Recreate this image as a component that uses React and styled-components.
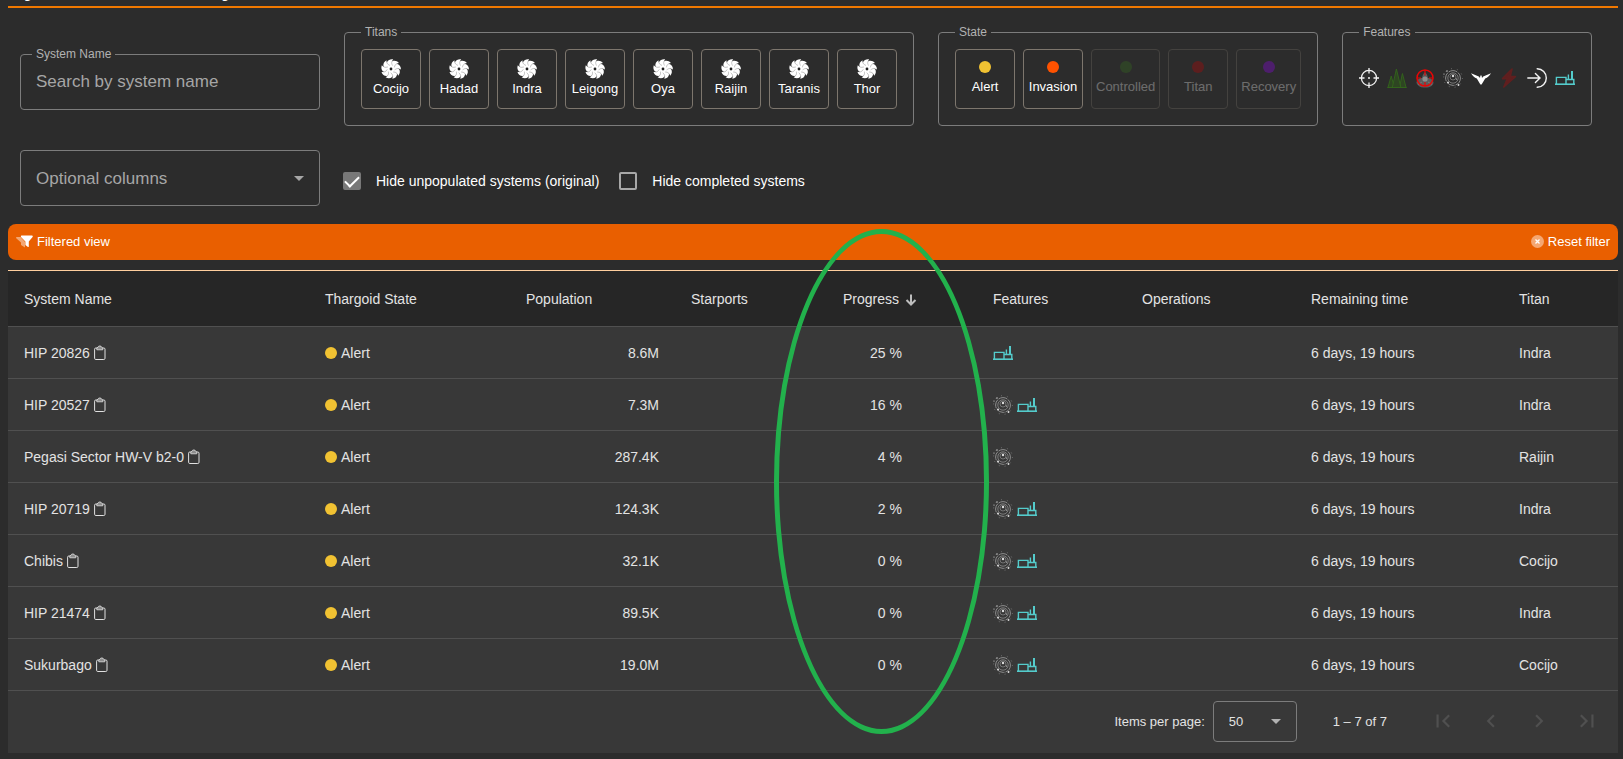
import React, { useState } from 'react'
import styled, { createGlobalStyle } from 'styled-components';

const titans = ['Cocijo', 'Hadad', 'Indra', 'Leigong', 'Oya', 'Raijin', 'Taranis', 'Thor'];

const states = [
    { name: 'Alert', color: '#f1c232', on: true },
    { name: 'Invasion', color: '#ff5200', on: true },
    { name: 'Controlled', color: '#38761d', on: false },
    { name: 'Titan', color: '#cc0000', on: false },
    { name: 'Recovery', color: '#9900ff', on: false },
];

// column widths are shares, the table stretches them to the window
const columns = [
    { title: 'System Name', width: 301 },
    { title: 'Thargoid State', width: 201 },
    { title: 'Population', width: 165 },
    { title: 'Starports', width: 152 },
    { title: 'Progress', width: 150, sorted: true },
    { title: 'Features', width: 149 },
    { title: 'Operations', width: 169 },
    { title: 'Remaining time', width: 208 },
    { title: 'Titan', width: 115 },
];

const systems = [
    { name: 'HIP 20826', population: '8.6M', progress: 25, rings: false, station: true, titan: 'Indra' },
    { name: 'HIP 20527', population: '7.3M', progress: 16, rings: true, station: true, titan: 'Indra' },
    { name: 'Pegasi Sector HW-V b2-0', population: '287.4K', progress: 4, rings: true, station: false, titan: 'Raijin' },
    { name: 'HIP 20719', population: '124.3K', progress: 2, rings: true, station: true, titan: 'Indra' },
    { name: 'Chibis', population: '32.1K', progress: 0, rings: true, station: true, titan: 'Cocijo' },
    { name: 'HIP 21474', population: '89.5K', progress: 0, rings: true, station: true, titan: 'Indra' },
    { name: 'Sukurbago', population: '19.0M', progress: 0, rings: true, station: true, titan: 'Cocijo' },
];

const blades = [0, 40, 80, 120, 160, 200, 240, 280, 320];

function TitanIcon() {
    return (
        <svg width="20" height="20" viewBox="0 0 20 20" aria-hidden="true">
            {blades.map((angle) => (
                <path key={angle} transform={`rotate(${angle} 10 10)`} fill="#fff"
                    d="M10 9C6.600 8 5.200 5.400 6.200 2.800C7.200 0.800 9.600 -0.200 12.200 0.300C11.200 1.400 10.800 2.800 11.200 4.200C11.500 5.600 12 6.900 12 9Z" />
            ))}
            <circle cx="10" cy="10" r="6" fill="#fff" />
            {blades.map((angle) => (
                <path key={angle} transform={`rotate(${angle} 10 10)`} fill="none" stroke="#777" strokeWidth="0.4"
                    d="M12 1.200C10.800 2.200 10.400 3.400 10.800 4.800C11 5.600 11.300 6 11.500 6.600" />
            ))}
            <circle cx="10" cy="10" r="1.4" fill="#222" />
        </svg>
    )
}

function CrosshairIcon() {
    return (
        <svg width="20" height="20" viewBox="0 0 20 20" fill="none" stroke="#f2f2f2" strokeWidth="1.3" aria-hidden="true">
            <circle cx="10" cy="10" r="7.6" />
            <path d="M10 0V5.500M10 14.500V20M0 10H5.500M14.500 10H20" />
            <circle cx="10" cy="10" r="1" fill="#f2f2f2" stroke="none" />
        </svg>
    )
}

function PeaksIcon() {
    return (
        <svg width="20" height="20" viewBox="0 0 20 20" fill="#2e4522" stroke="#33661c" strokeWidth="0.9" aria-hidden="true">
            <path d="M0.800 20L4.200 8L7.600 20Z" />
            <path d="M12.400 20L15.400 5.500L19.200 20Z" />
            <path d="M5.200 20L9.400 1L14 20Z" />
            <path d="M0.500 19.500H19.500" />
        </svg>
    )
}

function TargetIcon() {
    return (
        <svg width="20" height="20" viewBox="0 0 20 20" fill="none" aria-hidden="true">
            <path fill="#5c5c5c" d="M10 4.500C12 5.500 12.500 8 13 10C16 10 18.500 12 18.500 15C17 19 13 20 10 19.500C6 20 2.500 18 1.500 15C1.500 12 4 10 7 10C7.500 8 8 5.500 10 4.500Z" />
            <circle cx="10" cy="11" r="2.600" fill="#8d8d8d" />
            <path stroke="#7e7e7e" strokeWidth="0.800" d="M3 16.500L7 14M17 16.500L13 14" />
            <circle cx="10" cy="10" r="8" stroke="#e80505" strokeWidth="1.5" />
            <path stroke="#e80505" strokeWidth="1.2" d="M10 2V7.500M10 14V18M2 10H6M14 10H18" />
        </svg>
    )
}

function RingsIcon() {
    return (
        <svg width="20" height="20" viewBox="0 0 20 20" fill="none" stroke="#8c8c8c" aria-hidden="true">
            <circle cx="10" cy="10" r="7.4" strokeWidth="1" strokeDasharray="9 1" />
            <circle cx="10" cy="10" r="5.200" strokeWidth="0.8" />
            <circle cx="10" cy="9" r="3" strokeWidth="0.7" />
            <circle cx="10" cy="10" r="9.400" strokeWidth="0.700" strokeDasharray="1 5" />
            <g fill="#dcdcdc" stroke="none">
                <circle cx="10" cy="8" r="1.200" />
                <circle cx="5" cy="14.6" r="1" />
                <circle cx="15.5" cy="17" r="0.9" />
                <circle cx="4" cy="3" r="0.7" />
                <circle cx="1" cy="6" r="0.6" />
                <circle cx="13.500" cy="11" r="0.6" />
            </g>
        </svg>
    )
}

function WingsIcon() {
    return (
        <svg width="20" height="20" viewBox="0 0 20 20" fill="#fff" aria-hidden="true">
            <path d="M0 5.200L7.800 8.400L9 10L9.400 7.400H10.600L11 10L12.200 8.400L20 5.200C18.500 7.600 16.500 9.400 14.200 10.600L10.600 16.400H9.400L5.800 10.600C3.500 9.400 1.500 7.600 0 5.200Z" />
        </svg>
    )
}

function BoltIcon() {
    return (
        <svg width="20" height="20" viewBox="0 0 20 20" fill="#601f1f" stroke="#601f1f" strokeWidth="1.600" strokeLinejoin="round" aria-hidden="true">
            <path d="M13 1L3.500 10.600H8.400L4.800 19L16.400 8.600H11.200Z" />
        </svg>
    )
}

function EnterIcon() {
    return (
        <svg width="20" height="20" viewBox="0 0 20 20" fill="none" stroke="#f2f2f2" strokeWidth="1.400" strokeLinecap="round" aria-hidden="true">
            <path d="M0.800 10H12.800M8.400 5.400L13 10L8.400 14.600" />
            <path d="M10.200 0.800C15.400 0.900 19.300 5 19.300 10C19.300 15 15.400 19.100 10.200 19.200" />
        </svg>
    )
}

function StationIcon() {
    return (
        <svg width="20" height="20" viewBox="0 0 20 20" fill="none" stroke="#54cccc" aria-hidden="true">
            <path strokeWidth="1.400" d="M1.400 16V9.400H11V16M11 11.500H18.800V16M13.400 11V6.500" />
            <path strokeWidth="2" d="M17 11.500V3" />
            <path strokeWidth="1.600" d="M0 16.200H20" />
        </svg>
    )
}

function ClipboardIcon() {
    return (
        <svg width="12" height="16" viewBox="0 0 12 16" fill="none" stroke="#e0e0e0" strokeWidth="1" aria-hidden="true">
            <rect x="0.600" y="3" width="10.400" height="11.500" rx="1.200" />
            <path d="M2.800 4.800V3L4 2.200C4.200 0.500 7.400 0.500 7.600 2.200L8.800 3V4.800Z" fill="#8d8d8d" strokeWidth="0.800" />
        </svg>
    )
}

function Pager({ d, label }) {
    return (
        <PageButton disabled aria-label={label}>
            <svg width="26" height="26" viewBox="0 0 24 24" fill="currentColor"><path d={d} /></svg>
        </PageButton>
    )
}

function Arrow() {
    return (
        <SelectArrow width="10" height="5" viewBox="0 0 10 5" aria-hidden="true"><path d="M0 0L5 5L10 0Z" fill="currentColor" /></SelectArrow>
    )
}

function App() {
    const [search, setSearch] = useState('');
    const [hideUnpopulated, setHideUnpopulated] = useState(true);
    const [hideCompleted, setHideCompleted] = useState(false);
    return (
        <Page>
            <GlobalStyle />
            <Title>Systems list history</Title>
            <Filters>
                <FilterRow>
                    <SearchField>
                        <legend><label htmlFor="system">System Name</label></legend>
                        <SearchInput id="system" placeholder="Search by system name" value={search} onChange={(e) => setSearch(e.target.value)} />
                    </SearchField>
                    <Group>
                        <legend>Titans</legend>
                        <Tiles>
                            {titans.map((name) => (
                                <Tile key={name} $gap={1}><TitanIcon />{name}</Tile>
                            ))}
                        </Tiles>
                    </Group>
                    <Group>
                        <legend>State</legend>
                        <Tiles>
                            {states.map((state) => (
                                <Tile key={state.name} $off={!state.on} $gap={5}>
                                    <Dot $color={state.color} />{state.name}
                                </Tile>
                            ))}
                        </Tiles>
                    </Group>
                    <Group>
                        <legend>Features</legend>
                        <FeatureList>
                            <IconButton aria-label="Attacked"><CrosshairIcon /></IconButton>
                            <IconButton aria-label="Barnacle matrix"><PeaksIcon /></IconButton>
                            <IconButton aria-label="Spire target"><TargetIcon /></IconButton>
                            <IconButton aria-label="Ring features"><RingsIcon /></IconButton>
                            <IconButton aria-label="Federal ships"><WingsIcon /></IconButton>
                            <IconButton aria-label="Reactivation"><BoltIcon /></IconButton>
                            <IconButton aria-label="Nearby"><EnterIcon /></IconButton>
                            <IconButton aria-label="Ground ports"><StationIcon /></IconButton>
                        </FeatureList>
                    </Group>
                </FilterRow>
                <OptionRow>
                    <SelectBox>
                        <ColumnSelect aria-label="Optional columns" defaultValue="">
                            <option value="">Optional columns</option>
                        </ColumnSelect>
                        <Arrow />
                    </SelectBox>
                    <Checks>
                        <CheckLabel>
                            <Check type="checkbox" checked={hideUnpopulated} onChange={(e) => setHideUnpopulated(e.target.checked)} />
                            Hide unpopulated systems (original)
                        </CheckLabel>
                        <CheckLabel>
                            <Check type="checkbox" checked={hideCompleted} onChange={(e) => setHideCompleted(e.target.checked)} />
                            Hide completed systems
                        </CheckLabel>
                    </Checks>
                </OptionRow>
            </Filters>
            <Results>
                <Bar>
                    <BarItem>
                        <svg width="17" height="13" viewBox="0 0 17 13" fill="#fff" aria-hidden="true">
                            <path opacity="0.45" d="M0.600 2H4.600L9 7V12.600L5 10V7.500L0.200 3.200Q-0.200 2.200 0.600 2Z" />
                            <path d="M5.400 0.400H16.200Q17.200 1 16.600 2L12.800 6.600V11.400Q12.600 12.200 11.600 11.800L9.400 10V6.600L5 2Q4.600 1 5.400 0.400Z" />
                        </svg>
                        Filtered view
                    </BarItem>
                    <ResetButton>
                        <svg width="13" height="13" viewBox="0 0 13 13" aria-hidden="true">
                            <circle cx="6.500" cy="6.500" r="6.500" fill="#f5a772" />
                            <path d="M4.500 4.500L8.500 8.500M8.500 4.500L4.500 8.500" stroke="#fff" strokeWidth="1.300" />
                        </svg>
                        Reset filter
                    </ResetButton>
                </Bar>
                <Table>
                    <colgroup>
                        {columns.map((c) => <Col key={c.title} $width={c.width} />)}
                    </colgroup>
                    <thead>
                        <tr>
                            {columns.map((c) => (
                                <Th key={c.title} aria-sort={c.sorted ? 'descending' : undefined}>
                                    {c.title}
                                    {c.sorted && (
                                        <SortArrow width="12" height="12" viewBox="0 0 12 12" aria-hidden="true">
                                            <path d="M6 0.500V10.500M1.500 6L6 10.500L10.500 6" fill="none" stroke="#bdbdbd" strokeWidth="2" />
                                        </SortArrow>
                                    )}
                                </Th>
                            ))}
                        </tr>
                    </thead>
                    <tbody>
                        {systems.map((s) => (
                            <tr key={s.name}>
                                <Td><Inline>{s.name}<IconButton aria-label={`Copy ${s.name}`}><ClipboardIcon /></IconButton></Inline></Td>
                                <Td><Inline><Dot $color="#f1c232" />Alert</Inline></Td>
                                <Td $right>{s.population}</Td>
                                <Td></Td>
                                <ProgressTd $right>{s.progress} %</ProgressTd>
                                <Td><Inline>{s.rings && <RingsIcon />}{s.station && <StationIcon />}</Inline></Td>
                                <Td></Td>
                                <Td>6 days, 19 hours</Td>
                                <Td>{s.titan}</Td>
                            </tr>
                        ))}
                    </tbody>
                </Table>
                <Footer>
                    <label htmlFor="size">Items per page:</label>
                    <SizeBox>
                        <SizeSelect id="size" defaultValue="50">
                            <option>50</option>
                        </SizeSelect>
                        <Arrow />
                    </SizeBox>
                    <Range>1 – 7 of 7</Range>
                    <Pager label="First page" d="M18.410 16.590L13.820 12l4.590-4.590L17 6l-6 6 6 6zM6 6h2v12H6z" />
                    <Pager label="Previous page" d="M15.410 7.410L14 6l-6 6 6 6 1.410-1.410L10.830 12z" />
                    <Pager label="Next page" d="M10 6L8.590 7.410 13.170 12l-4.580 4.590L10 18l6-6z" />
                    <Pager label="Last page" d="M5.590 7.410L10.180 12l-4.590 4.590L7 18l6-6-6-6zM16 6h2v12h-2z" />
                </Footer>
                <Marker />
            </Results>
        </Page>
    )
}

export default App

const GlobalStyle = createGlobalStyle`
    * {
        box-sizing:border-box;
    }
    body {
        margin:0;
        background-color:#2c2c2c;
    }
    button, input, select {
        font-family:inherit;
        margin:0;
    }
`;
const Page = styled.div`
    padding:0 5px 6px 8px;
    overflow:hidden;
    color:#fff;
    font-family:"Liberation Sans", Arial, sans-serif;
    font-size:14px;
`;
// the page is scrolled, only the foot of the title shows
const Title = styled.h1`
    margin:-26px 0 0;
    padding-bottom:4px;
    border-bottom:2px solid #f07800;
    font-size:24px;
    line-height:28px;
`;
const Filters = styled.div`
    padding:17px 12px 18px;
`;
const FilterRow = styled.div`
    display:flex;
    flex-wrap:wrap;
    align-items:flex-end;
    gap:24px;
`;
const Group = styled.fieldset`
    margin:0;
    min-width:0;
    padding:10px 16px 16px;
    border:1px solid #7c7c7c;
    border-radius:4px;
    legend {
        padding:0 4px;
        color:#b2b2b2;
        font-size:12px;
        line-height:14px;
    }
`;
const SearchField = styled(Group)`
    width:300px;
    margin-bottom:16px;
    padding:0 11px 6px;
`;
const SearchInput = styled.input`
    display:block;
    width:100%;
    height:42px;
    padding:0 4px;
    border:0;
    outline:none;
    background:none;
    color:#fff;
    font-size:17px;
    &::placeholder {
        color:#a6a6a6;
        opacity:1;
    }
`;
const Tiles = styled.div`
    display:flex;
    flex-wrap:wrap;
    gap:8px;
`;
const Tile = styled.button`
    display:flex;
    flex-direction:column;
    align-items:center;
    justify-content:center;
    gap:${(p) => p.$gap}px;
    min-width:60px;
    height:60px;
    padding:0 4px 2px;
    border:1px solid #7d766d;
    border-radius:4px;
    background:none;
    color:#fff;
    font-size:13px;
    line-height:18px;
    opacity:${(p) => (p.$off ? 0.3 : 1)};
    cursor:pointer;
`;
const Dot = styled.span`
    width:12px;
    height:12px;
    border-radius:50%;
    background-color:${(p) => p.$color};
`;
const FeatureList = styled.div`
    display:flex;
    align-items:center;
    gap:8px;
    height:60px;
    padding-bottom:2px;
`;
const IconButton = styled.button`
    display:flex;
    padding:0;
    border:0;
    background:none;
    cursor:pointer;
`;
const OptionRow = styled.div`
    display:flex;
    flex-wrap:wrap;
    align-items:center;
    gap:12px;
    margin-top:24px;
`;
const SelectBox = styled.div`
    position:relative;
    width:300px;
    color:#a6a6a6;
`;
const SelectArrow = styled.svg`
    position:absolute;
    right:16px;
    top:calc(50% - 2px);
    pointer-events:none;
`;
const ColumnSelect = styled.select`
    appearance:none;
    width:100%;
    height:56px;
    padding:0 15px;
    border:1px solid #7c7c7c;
    border-radius:4px;
    background:none;
    color:inherit;
    font-size:17px;
`;
const Checks = styled.div`
    display:flex;
    flex-wrap:wrap;
    column-gap:9px;
    padding-top:6px;
`;
const CheckLabel = styled.label`
    display:flex;
    align-items:center;
    gap:15px;
    padding-left:11px;
`;
const Check = styled.input`
    appearance:none;
    display:flex;
    justify-content:center;
    width:18px;
    height:18px;
    border:2px solid #a8a8a8;
    border-radius:2px;
    &:checked {
        border-color:#787878;
        background-color:#787878;
    }
    &:checked::after {
        content:'';
        width:6px;
        height:12px;
        margin-top:-1px;
        border:solid #fff;
        border-width:0 2px 2px 0;
        transform:rotate(45deg);
    }
`;
const Results = styled.div`
    position:relative;
`;
const Bar = styled.div`
    display:flex;
    align-items:center;
    justify-content:space-between;
    height:36px;
    margin-bottom:10px;
    padding:0 8px 2px;
    border-radius:8px;
    background-color:#e95f00;
    font-size:13px;
`;
const BarItem = styled.div`
    display:flex;
    align-items:center;
    gap:4px;
`;
const ResetButton = styled.button`
    display:flex;
    align-items:center;
    gap:4px;
    padding:0;
    border:0;
    background:none;
    color:#fff;
    font-size:13px;
    cursor:pointer;
`;
const Table = styled.table`
    width:100%;
    table-layout:fixed;
    border-spacing:0;
    border-top:1px solid #ffcf9e;
    background-color:#383838;
    color:#e3e3e3;
`;
const Col = styled.col`
    width:${(p) => p.$width}px;
`;
const Th = styled.th`
    height:56px;
    padding:0 16px;
    border-bottom:1px solid #505050;
    background-color:#262626;
    font-weight:400;
    text-align:left;
    white-space:nowrap;
`;
const SortArrow = styled.svg`
    margin-left:6px;
    vertical-align:-2px;
`;
const Td = styled.td`
    height:52px;
    padding:0 16px;
    border-bottom:1px solid #505050;
    text-align:${(p) => (p.$right ? 'right' : 'left')};
`;
const ProgressTd = styled(Td)`
    padding-right:75px;
`;
const Inline = styled.div`
    display:flex;
    align-items:center;
    gap:4px;
`;
const Footer = styled.div`
    display:flex;
    align-items:center;
    justify-content:flex-end;
    height:62px;
    padding:0 7px 2px 0;
    background-color:#383838;
    color:#e3e3e3;
    font-size:13px;
`;
const SizeBox = styled(SelectBox)`
    width:84px;
    margin-left:8px;
    color:#b2b2b2;
`;
const SizeSelect = styled(ColumnSelect)`
    display:block;
    height:41px;
    color:#e3e3e3;
    font-size:13px;
`;
const Range = styled.div`
    margin:0 32px 0 36px;
`;
const PageButton = styled.button`
    display:flex;
    align-items:center;
    justify-content:center;
    width:48px;
    height:48px;
    padding:0;
    border:0;
    background:none;
    color:#505050;
`;
// hand drawn ring around the progress column
const Marker = styled.div`
    position:absolute;
    top:5px;
    left:47.6%;
    width:215px;
    height:505px;
    border:5px solid #22b14c;
    border-radius:50%;
    pointer-events:none;
`;
